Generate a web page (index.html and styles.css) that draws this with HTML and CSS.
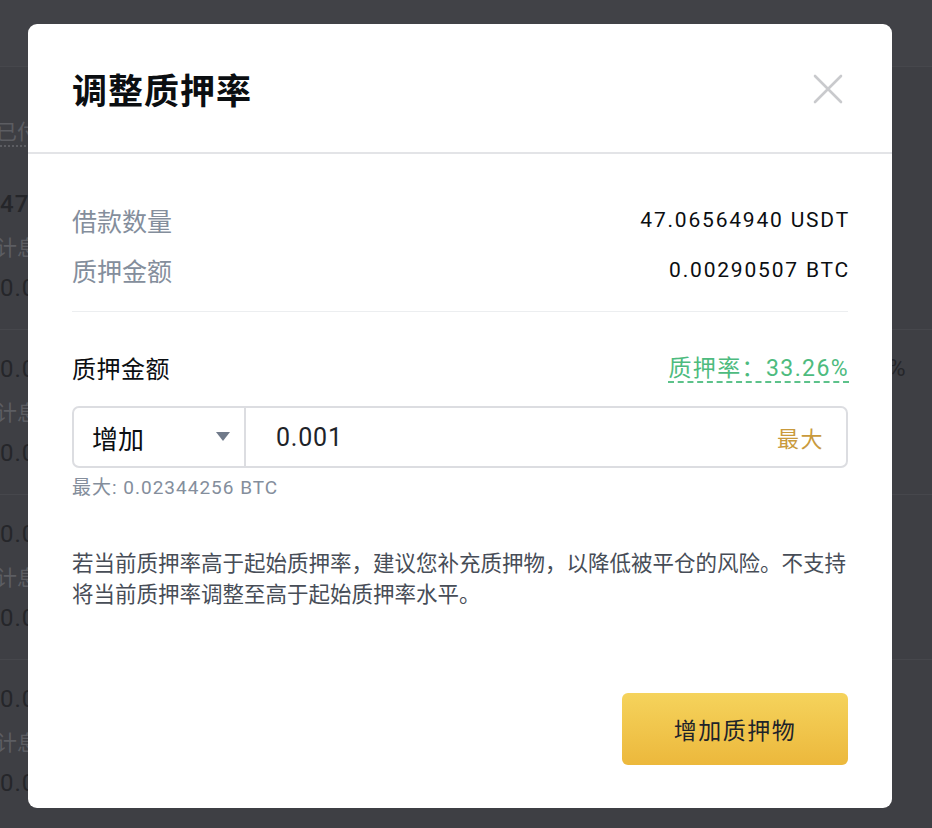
FILE: index.html
```
<!DOCTYPE html>
<html lang="zh-CN">
<head>
<meta charset="utf-8">
<title>调整质押率</title>
<link rel="stylesheet" href="styles.css">
</head>
<body>
<div class="page">
  <div class="page-top"></div>
  <div class="page-block first">
    <div class="bg-label dotted">已付</div>
    <div class="bg-num big">47.</div>
    <div class="bg-label">计息</div>
    <div class="bg-num">0.0</div>
  </div>
  <div class="page-block">
    <div class="bg-num">0.0</div>
    <div class="bg-label">计息</div>
    <div class="bg-num">0.0</div>
  </div>
  <div class="page-block">
    <div class="bg-num">0.0</div>
    <div class="bg-label">计息</div>
    <div class="bg-num">0.0</div>
  </div>
  <div class="page-block last">
    <div class="bg-num">0.0</div>
    <div class="bg-label">计息</div>
    <div class="bg-num">0.0</div>
  </div>
  <div class="bg-pct">%</div>
</div>

<div class="modal">
  <div class="modal-header">
    <h1 class="modal-title">调整质押率</h1>
    <button class="close-btn" aria-label="关闭">
      <svg width="30" height="30" viewBox="0 0 30 30"><path d="M2 2 L28 28 M28 2 L2 28" stroke="#c9cacd" stroke-width="2.6" stroke-linecap="round" fill="none"/></svg>
    </button>
  </div>
  <div class="modal-body">
    <div class="info-row">
      <span class="info-label">借款数量</span>
      <span class="info-value">47.06564940 USDT</span>
    </div>
    <div class="info-row">
      <span class="info-label">质押金额</span>
      <span class="info-value">0.00290507 BTC</span>
    </div>
    <div class="divider"></div>
    <div class="field-head">
      <span class="field-label">质押金额</span>
      <span class="rate">质押率：33.26%</span>
    </div>
    <div class="input-box">
      <div class="select">
        <span class="select-text">增加</span>
        <span class="caret"></span>
      </div>
      <div class="amount">
        <span class="amount-value">0.001</span>
        <span class="max-link">最大</span>
      </div>
    </div>
    <div class="hint">最大: 0.02344256 BTC</div>
    <p class="note">若当前质押率高于起始质押率，建议您补充质押物，以降低被平仓的风险。不支持将当前质押率调整至高于起始质押率水平。</p>
    <div class="actions">
      <button class="primary-btn">增加质押物</button>
    </div>
  </div>
</div>
</body>
</html>
```
FILE: styles.css
```
* { box-sizing: border-box; }
html, body { margin: 0; padding: 0; }
body {
  width: 932px;
  height: 828px;
  overflow: hidden;
  background: #3e3f44;
  font-family: Roboto, "Noto Sans CJK SC", sans-serif;
  position: relative;
}

/* background page (dimmed) */
.page {
  width: 932px;
  height: 828px;
  display: flex;
  flex-direction: column;
}
.page-top {
  height: 67px;
  background: #414247;
  border-bottom: 1px solid #46474c;
  flex: none;
}
.page-block {
  height: 165px;
  border-bottom: 1px solid #46474c;
  padding-top: 20px;
  display: flex;
  flex-direction: column;
  gap: 4px;
  flex: none;
}
.page-block.first { height: 263px; padding-top: 48px; }
.page-block.last { border-bottom: none; }
.bg-label {
  font-size: 21px;
  color: #5c5d62;
  line-height: 38px;
  margin-left: -4px;
  font-family: "Noto Sans CJK SC", sans-serif;
}
.bg-label.dotted {
  align-self: flex-start;
  line-height: 30px;
  border-bottom: 2px dotted #5c5d62;
  margin-bottom: 34px;
}
.bg-num {
  font-size: 24px;
  color: #25262a;
  line-height: 38px;
  letter-spacing: 1px;
}
.bg-num.big { font-weight: 500; }
.bg-pct {
  position: absolute;
  left: 888px;
  top: 354px;
  font-size: 24px;
  color: #25262a;
}

/* modal */
.modal {
  position: absolute;
  left: 28px;
  top: 24px;
  width: 864px;
  height: 784px;
  background: #fff;
  border-radius: 9px;
  display: flex;
  flex-direction: column;
}
.modal-header {
  height: 130px;
  flex: none;
  padding: 0 44px;
  display: flex;
  align-items: center;
  justify-content: space-between;
  border-bottom: 2px solid #e3e4e7;
}
.modal-title {
  margin: 0;
  font-size: 35px;
  font-weight: 700;
  color: #0b0e11;
  letter-spacing: 1px;
  font-family: "Noto Sans CJK SC", sans-serif;
}
.close-btn {
  border: none;
  background: none;
  padding: 0;
  margin-right: 5px;
  margin-top: 2px;
  width: 30px;
  height: 30px;
  display: block;
}
.close-btn svg { display: block; }

.modal-body {
  padding: 41px 44px 0;
  display: flex;
  flex-direction: column;
}
.info-row {
  height: 50px;
  display: flex;
  align-items: center;
  justify-content: space-between;
}
.info-label {
  font-size: 25px;
  color: #848e9c;
  font-family: "Noto Sans CJK SC", sans-serif;
}
.info-value {
  font-size: 21px;
  color: #0b0e11;
  letter-spacing: 1.8px;
  margin-right: -2px;
}
.divider {
  margin-top: 16px;
  height: 1px;
  background: #eceef0;
}
.field-head {
  margin-top: 37px;
  height: 36px;
  display: flex;
  align-items: center;
  justify-content: space-between;
}
.field-label {
  font-size: 24px;
  color: #0b0e11;
  font-family: "Noto Sans CJK SC", sans-serif;
  letter-spacing: 0.5px;
}
.rate {
  font-size: 23px;
  color: #4dbb7e;
  line-height: 24px;
  padding-top: 2px;
  border-bottom: 2px dashed #5cc28a;
  letter-spacing: 1.4px;
  margin-right: -1px;
  position: relative;
  top: 2px;
}
.input-box {
  margin-top: 21px;
  height: 62px;
  border: 2px solid #dcdde1;
  border-radius: 7px;
  display: flex;
}
.select {
  width: 172px;
  flex: none;
  border-right: 2px solid #dcdde1;
  display: flex;
  align-items: center;
  justify-content: space-between;
  padding: 0 14px 0 18px;
}
.select-text {
  font-size: 26px;
  color: #0b0e11;
  font-family: "Noto Sans CJK SC", sans-serif;
}
.caret {
  width: 0;
  height: 0;
  border-left: 7px solid transparent;
  border-right: 7px solid transparent;
  border-top: 9px solid #707a8a;
  margin-top: -2px;
}
.amount {
  flex: 1;
  display: flex;
  align-items: center;
  justify-content: space-between;
  padding: 0 22px 0 30px;
}
.amount-value {
  font-size: 25px;
  color: #1e2329;
  letter-spacing: 0.8px;
}
.max-link {
  font-size: 22px;
  color: #c99a3c;
  font-family: "Noto Sans CJK SC", sans-serif;
  letter-spacing: 1.5px;
}
.hint {
  margin-top: 7px;
  font-size: 19px;
  line-height: 26px;
  color: #848e9c;
  letter-spacing: 1px;
}
.note {
  margin: 45px -2px 0 0;
  font-size: 21.5px;
  line-height: 31px;
  color: #474d57;
  letter-spacing: 0;
  font-family: "Noto Sans CJK SC", sans-serif;
}
.actions {
  margin-top: 85px;
  display: flex;
  justify-content: flex-end;
}
.primary-btn {
  width: 226px;
  height: 72px;
  border: none;
  border-radius: 6px;
  background: linear-gradient(180deg, #f5d35c 0%, #ecb83c 100%);
  font-size: 23px;
  color: #1e2329;
  font-family: "Noto Sans CJK SC", sans-serif;
  letter-spacing: 1.5px;
}
```
